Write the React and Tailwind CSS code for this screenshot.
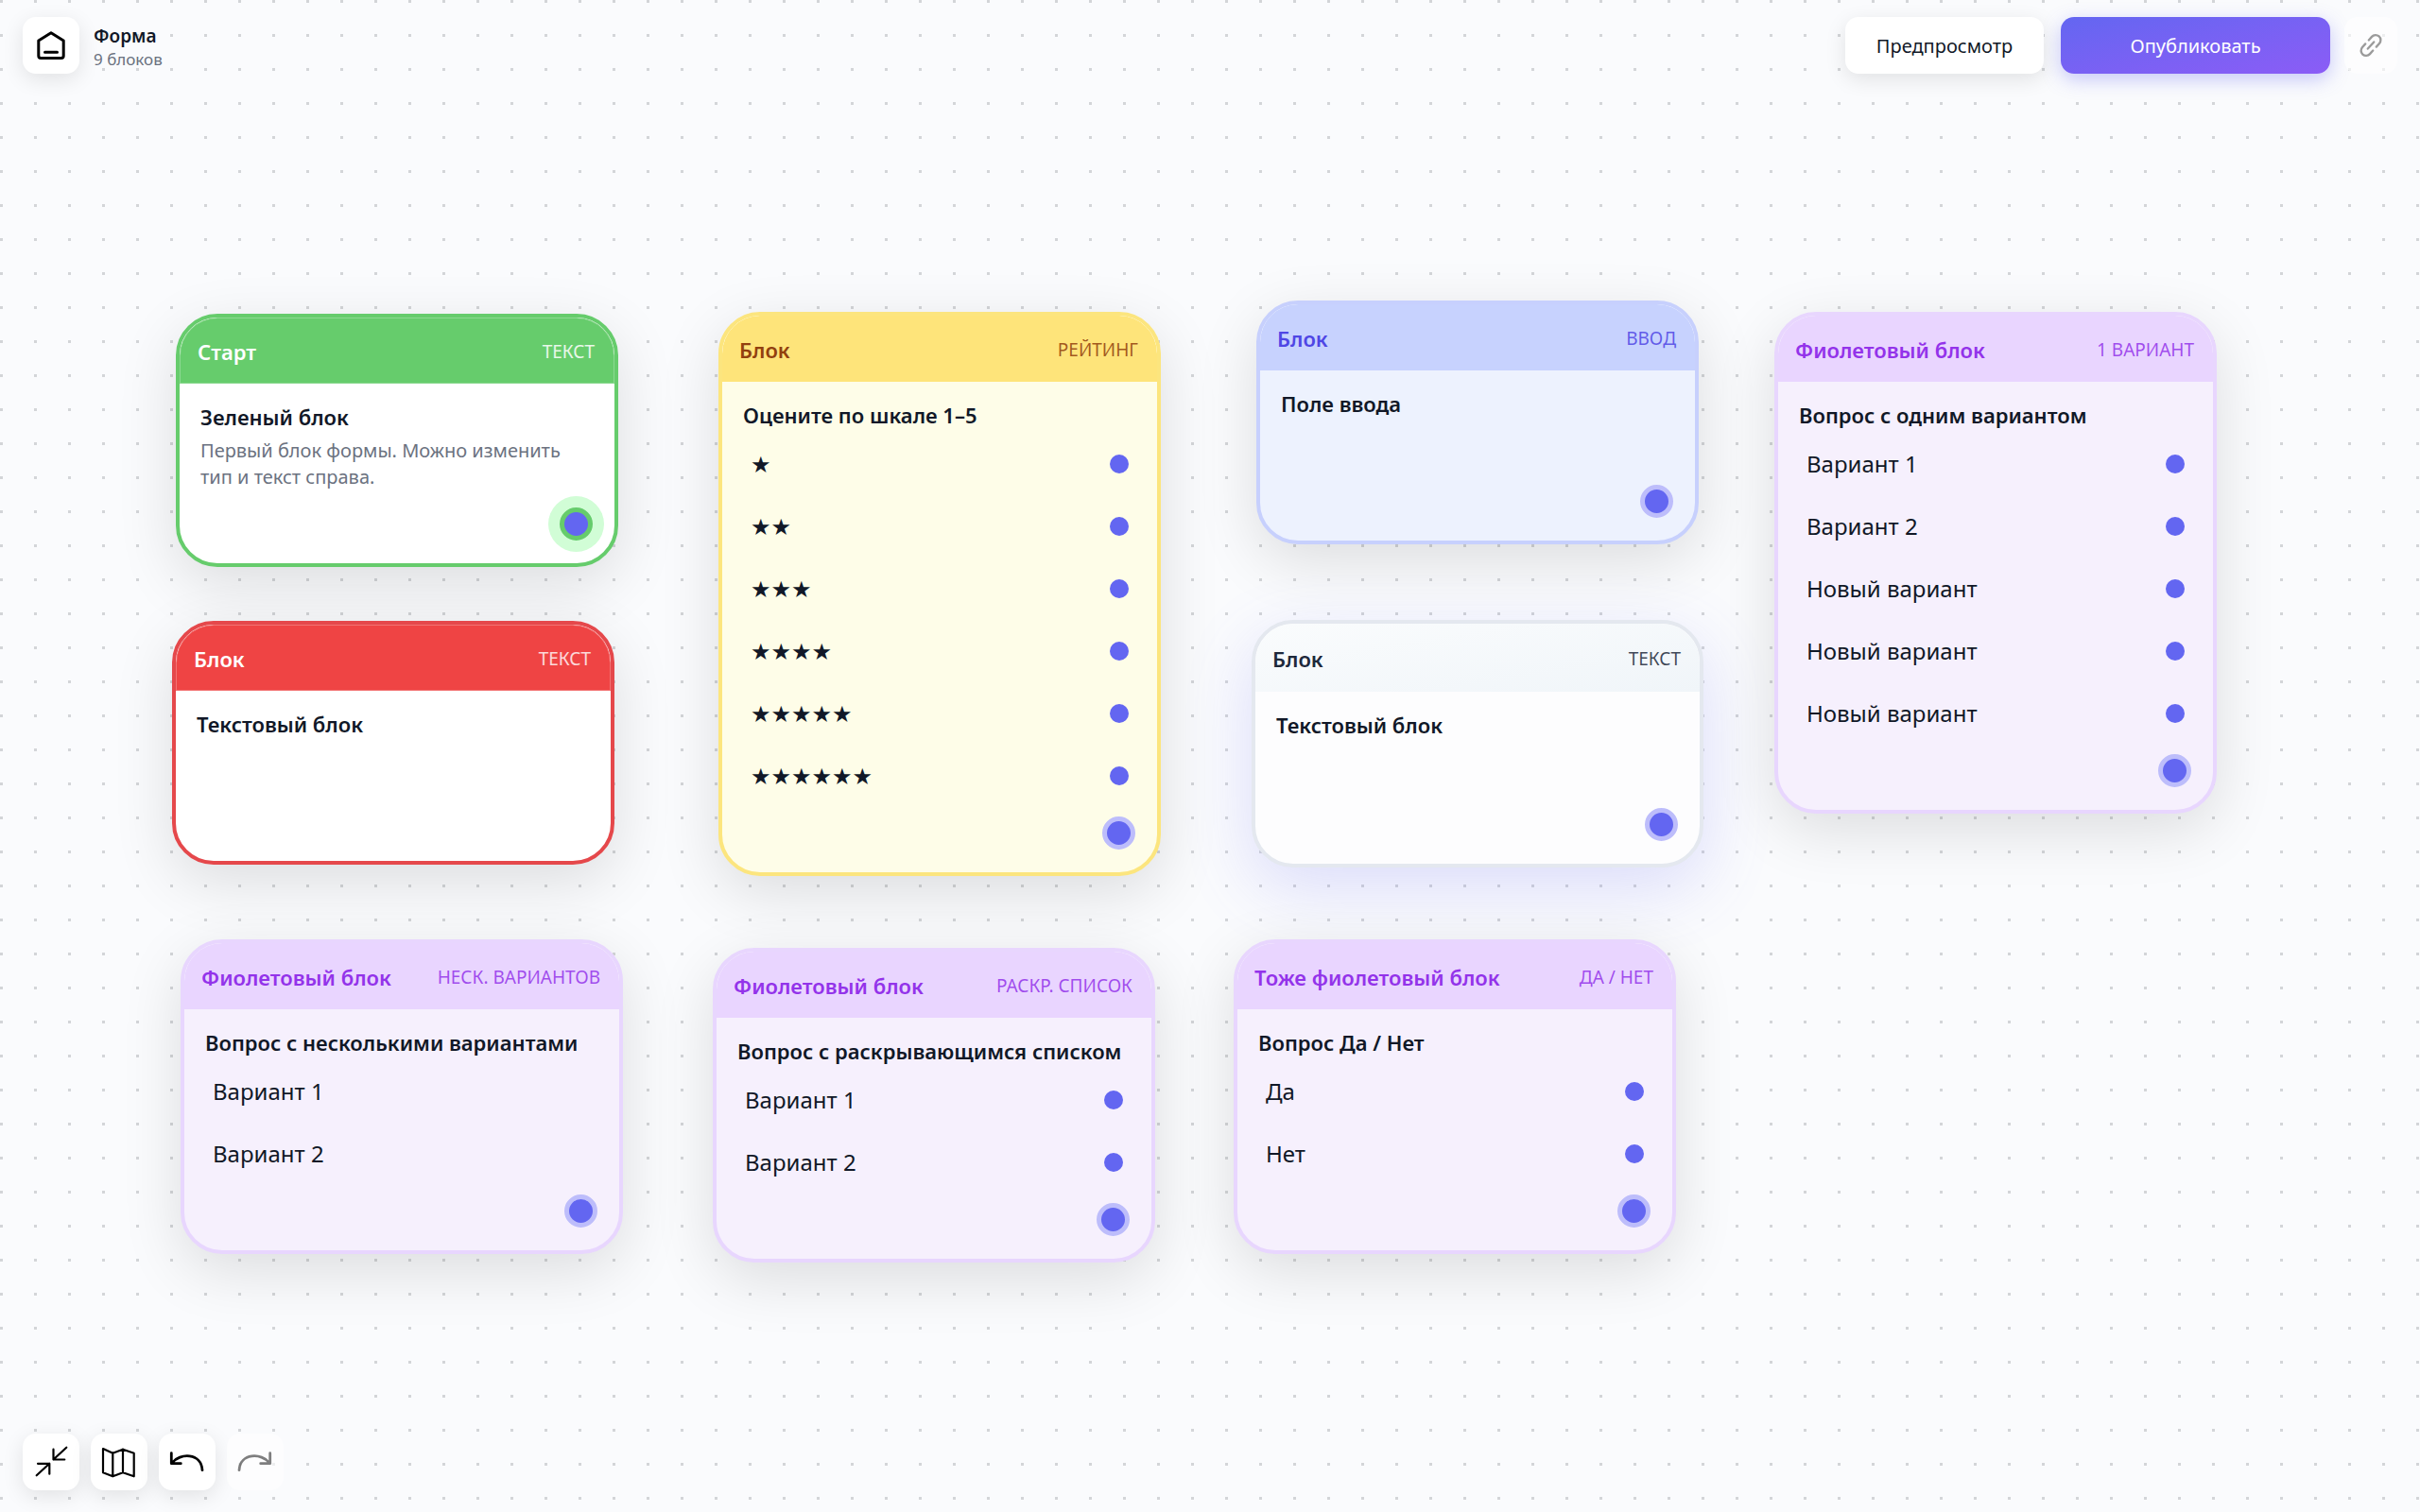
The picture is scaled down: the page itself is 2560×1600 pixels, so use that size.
import React from 'react';
import clsx from 'clsx';

const tones = {
  green: {
    card: 'border-[#66cc6c] bg-white',
    header: 'bg-[#66cc6c] text-white border border-white/25',
    type: 'text-white/85',
  },
  red: {
    card: 'border-[#e5484b] bg-white',
    header: 'bg-[#ef4444] text-white border border-white/25',
    type: 'text-white/80',
  },
  yellow: {
    card: 'border-[#fce57e] bg-[#fefde8]',
    header: 'bg-[#fee47a] text-[#92400e]',
    type: 'text-[#92400e]/85',
  },
  blue: {
    card: 'border-[#c7d0fd] bg-[#edf2fe]',
    header: 'bg-[#c7d2fe] text-[#4f46e5]',
    type: 'text-[#4f46e5]/85',
  },
  purple: {
    card: 'border-[#e8d6fe] bg-[#f6f0fd]',
    header: 'bg-[#e9d5ff] text-[#9333ea]',
    type: 'text-[#9333ea]/85',
  },
  plain: {
    card: 'border-[#e4e8ef] bg-[#fdfdfe]',
    header: 'bg-gradient-to-br from-[#fafcfd] to-[#f0f5f9] text-[#1e293b]',
    type: 'text-[#1e293b]/85',
  },
};

const blocks = [
  {
    id: 1, place: 'left-[186px] top-[332px]', tone: 'green', name: 'Старт', type: 'Текст', title: 'Зеленый блок',
    text: 'Первый блок формы. Можно изменить тип и текст справа.', port: 'start',
  },
  { id: 2, place: 'left-[182px] top-[657px]', tone: 'red', name: 'Блок', type: 'Текст', title: 'Текстовый блок' },
  {
    id: 3, place: 'left-[760px] top-[330px]', tone: 'yellow', name: 'Блок', type: 'Рейтинг', title: 'Оцените по шкале 1–5',
    options: ['★', '★★', '★★★', '★★★★', '★★★★★', '★★★★★★'], optionPorts: true, port: 'default',
  },
  { id: 4, place: 'left-[1329px] top-[318px]', tone: 'blue', name: 'Блок', type: 'Ввод', title: 'Поле ввода', port: 'default' },
  { id: 5, place: 'left-[1324px] top-[656px]', tone: 'plain', name: 'Блок', type: 'Текст', title: 'Текстовый блок', port: 'default', active: true },
  {
    id: 6, place: 'left-[1877px] top-[330px]', tone: 'purple', name: 'Фиолетовый блок', type: '1 вариант', title: 'Вопрос с одним вариантом',
    options: ['Вариант 1', 'Вариант 2', 'Новый вариант', 'Новый вариант', 'Новый вариант'], optionPorts: true, port: 'default',
  },
  {
    id: 7, place: 'left-[191px] top-[994px]', tone: 'purple', name: 'Фиолетовый блок', type: 'Неск. вариантов', title: 'Вопрос с несколькими вариантами',
    options: ['Вариант 1', 'Вариант 2'], port: 'default',
  },
  {
    id: 8, place: 'left-[754px] top-[1003px]', tone: 'purple', name: 'Фиолетовый блок', type: 'Раскр. список', title: 'Вопрос с раскрывающимся списком',
    options: ['Вариант 1', 'Вариант 2'], optionPorts: true, port: 'default',
  },
  {
    id: 9, place: 'left-[1305px] top-[994px]', tone: 'purple', name: 'Тоже фиолетовый блок', type: 'Да / Нет', title: 'Вопрос Да / Нет',
    options: ['Да', 'Нет'], optionPorts: true, port: 'default',
  },
];

const Block = ({ block }) => {
  const tone = tones[block.tone];

  return (
    <article
      className={clsx(
        'absolute flex flex-col overflow-hidden rounded-[44px] border-4',
        block.place,
        tone.card,
        block.active
          ? 'w-[478px] min-h-[262px] shadow-[0_22px_72px_rgba(99,102,241,0.2)]'
          : 'w-[468px] shadow-[0_18px_64px_rgba(0,0,0,0.12)]',
        !block.active && (block.text ? 'min-h-[268px]' : 'min-h-[258px]')
      )}
    >
      <header className={clsx('flex shrink-0 items-center justify-between rounded-t-[40px] pt-0.5 pr-5 pl-[18px]', block.active ? 'h-[72px]' : 'h-[70px]', tone.header)}>
        <h2 className="text-[22px] leading-7 font-semibold">{block.name}</h2>
        <span className={clsx('text-[19px] leading-7 uppercase', tone.type)}>{block.type}</span>
      </header>

      <div className="flex flex-1 flex-col pt-[21px]">
        <h3 className="pl-[22px] text-[22px] leading-7 font-semibold whitespace-nowrap">{block.title}</h3>
        {block.text && <p className="mt-2 pr-6 pl-[22px] text-[20px] leading-7 text-[#6b7280]">{block.text}</p>}

        {block.options && (
          <ul className="mt-[5px] pr-[30px] pb-[10px] pl-[30px]">
            {block.options.map((option, i) => (
              <li key={i} className="flex h-[66px] items-center justify-between">
                <span className="text-[24px] leading-8">{option}</span>
                {block.optionPorts && <button type="button" aria-label={`Связь: ${option}`} className="size-5 rounded-full bg-[#6366f1]" />}
              </li>
            ))}
          </ul>
        )}

        {block.port && (
          <div className="mt-auto flex justify-end pr-[23px] pb-6">
            <button
              type="button"
              aria-label="Связь с блоком"
              className={clsx(
                'size-[35px] rounded-full border-[5px] bg-[#6366f1]',
                block.port === 'start' ? 'border-[#66cc6c] shadow-[0_0_0_12px_#d1fdd6]' : 'border-[#bdbdfb]'
              )}
            />
          </div>
        )}
      </div>
    </article>
  );
};

const IconButton = ({ label, children, ...props }) => (
  <button
    type="button"
    aria-label={label}
    className="size-[60px] rounded-[14px] bg-white text-black shadow-[0_6px_22px_rgba(0,0,0,0.1)] disabled:bg-white/60 disabled:text-black/50 disabled:shadow-none"
    {...props}
  >
    <svg viewBox="0 0 60 60" className="size-full" fill="none" stroke="currentColor" strokeLinecap="round" strokeLinejoin="round">
      {children}
    </svg>
  </button>
);

const App = () => (
  <div className="relative flex min-h-screen flex-col overflow-hidden bg-[#fafbfd] bg-[conic-gradient(from_270deg_at_3px_3px,#d3d5d8_90deg,transparent_0deg)] bg-[size:36px_36px] font-['Noto_Sans','Open_Sans','DejaVu_Sans',sans-serif] text-[#111827]">
    {/* Верхняя панель */}
    <header className="relative z-10 flex items-center justify-between px-6 pt-[18px]">
      <div className="flex items-center gap-[15px]">
        <IconButton label="На главную">
          <path strokeWidth="3" d="M30 16.8 16.8 25v16q0 2.4 2.4 2.4h21.6q2.4 0 2.4-2.4V25ZM23.5 37.3h13" />
        </IconButton>
        <div className="pt-[3px]">
          <h1 className="text-[19px] leading-[26px] font-semibold">Форма</h1>
          <p className="text-[17px] leading-6 text-[#6b7280]">9 блоков</p>
        </div>
      </div>

      <div className="flex items-center">
        <button type="button" className="h-[60px] w-[210px] rounded-[14px] bg-white pt-0.5 text-[20px] shadow-[0_6px_22px_rgba(0,0,0,0.1)]">
          Предпросмотр
        </button>
        <button type="button" className="ml-[18px] h-[60px] w-[285px] rounded-[14px] bg-gradient-to-br from-[#6366f1] to-[#8b5cf6] pt-0.5 text-[20px] text-white shadow-[0_6px_20px_rgba(99,102,241,0.35)]">
          Опубликовать
        </button>
        <button type="button" aria-label="Скопировать ссылку" className="ml-[15px] flex h-[60px] w-14 items-center justify-center rounded-[14px] bg-white/60 text-[#9b9b9b]">
          <svg viewBox="0 0 28 28" className="size-[30px]" fill="none" stroke="currentColor" strokeWidth="2.2" strokeLinecap="round">
            <g transform="rotate(-48 14 14)">
              <path d="M11.5 19H7A5 5 0 0 1 7 9h4.5M16.5 9H21a5 5 0 0 1 0 10h-4.5M9.5 14h9" />
            </g>
          </svg>
        </button>
      </div>
    </header>

    <main className="flex-1">
      {blocks.map((block) => (
        <Block key={block.id} block={block} />
      ))}
    </main>

    {/* Инструменты холста */}
    <nav className="relative z-10 flex gap-3 px-6 pb-[23px]" aria-label="Инструменты">
      <IconButton label="Свернуть">
        <path strokeWidth="2.2" d="M46.3 14.7 32.5 27.5M32.5 16.7v10.8h11.8M14.7 44.3l13.6-12.5M16 31.8h12.3v10.9" />
      </IconButton>
      <IconButton label="Карта">
        <path strokeWidth="2.2" d="m13 16 10.3 4.7L34 16.7l11.7 4v24.6l-11.7-4-10.7 4L13 41.3ZM23.3 20.7v24.6M34 16.7v24.6" />
      </IconButton>
      <IconButton label="Отменить">
        <path strokeWidth="2.8" d="M13.3 20.7v11h10M14 31C22 20.5 45 20 46 38.7" />
      </IconButton>
      <IconButton label="Повторить" disabled>
        <path strokeWidth="2.8" d="M45.7 20.7v11h-10M45 31C37 20.5 14 20 13 38.7" />
      </IconButton>
    </nav>
  </div>
);

export default App;
